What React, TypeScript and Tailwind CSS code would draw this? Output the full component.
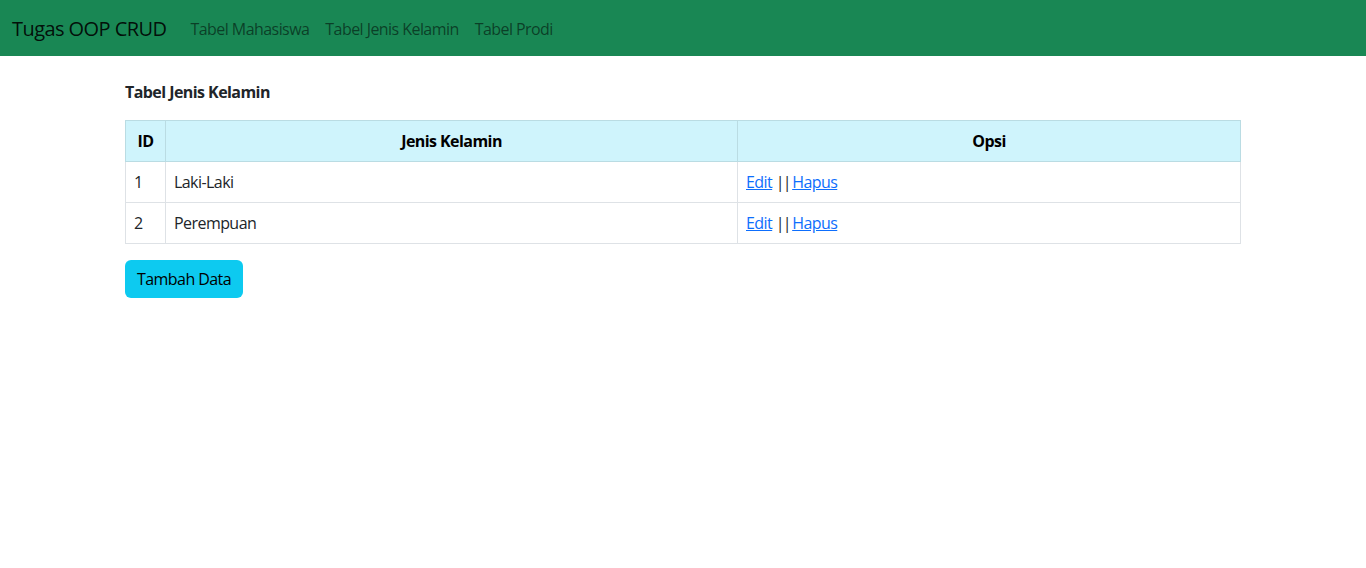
const rows = [
  { id: 1, name: "Laki-Laki" },
  { id: 2, name: "Perempuan" },
];

const navLinks = ["Tabel Mahasiswa", "Tabel Jenis Kelamin", "Tabel Prodi"];

export default function App() {
  return (
    <div className="min-h-screen bg-white font-['Open_Sans',sans-serif] text-[16px] tracking-[-0.035em] text-[#212529]">
      <nav className="flex h-14 items-center bg-[#198754] px-3 pt-0.5">
        <a href="#" className="mr-4 text-[20px] leading-[30px] text-black/90">
          Tugas OOP CRUD
        </a>
        <ul className="flex">
          {navLinks.map((link) => (
            <li key={link}>
              <a href="#" className="block px-2 py-2 text-black/55">
                {link}
              </a>
            </li>
          ))}
        </ul>
      </nav>

      <main className="mx-auto w-[1140px] px-3 pt-6">
        <h6 className="mb-4 text-[16px] font-bold leading-6">Tabel Jenis Kelamin</h6>

        <table className="mb-4 w-full border-collapse">
          <thead>
            <tr className="bg-[#cff4fc] text-black">
              <th className="w-10 border border-[#badce3] px-2 py-2 font-bold leading-6">ID</th>
              <th className="w-[572px] border border-[#badce3] px-2 py-2 font-bold leading-6">
                Jenis Kelamin
              </th>
              <th className="border border-[#badce3] px-2 py-2 font-bold leading-6">Opsi</th>
            </tr>
          </thead>
          <tbody>
            {rows.map((row) => (
              <tr key={row.id}>
                <td className="border border-[#dee2e6] px-2 py-2 leading-6">{row.id}</td>
                <td className="border border-[#dee2e6] px-2 py-2 leading-6">{row.name}</td>
                <td className="border border-[#dee2e6] px-2 py-2 leading-6">
                  <a href="#" className="text-[#0d6efd] underline">
                    Edit
                  </a>{" "}
                  <span className="mr-[-1px] tracking-[-0.12em]">||</span>{" "}
                  <a href="#" className="text-[#0d6efd] underline">
                    Hapus
                  </a>
                </td>
              </tr>
            ))}
          </tbody>
        </table>

        <button
          type="button"
          className="h-[38px] rounded-md bg-[#0dcaf0] px-3 leading-6 text-black"
        >
          Tambah Data
        </button>
      </main>
    </div>
  );
}
